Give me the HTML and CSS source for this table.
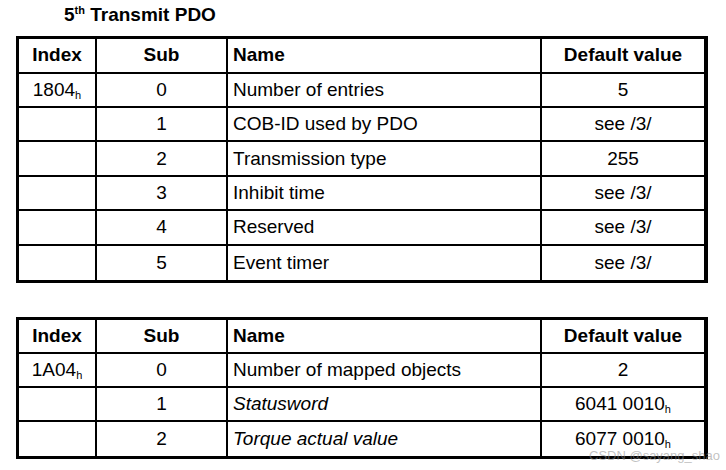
FILE: index.html
```html
<!DOCTYPE html>
<html>
<head>
<meta charset="utf-8">
<link rel="stylesheet" href="styles.css">
</head>
<body>
<div class="page">
  <h2 class="title">5<sup class="ord">th</sup> Transmit PDO</h2>
  <table class="obj first">
    <colgroup><col class="c1"><col class="c2"><col class="c3"><col class="c4"></colgroup>
    <thead>
      <tr><th>Index</th><th>Sub</th><th class="l">Name</th><th>Default value</th></tr>
    </thead>
    <tbody>
      <tr><td>1804<sub class="hx">h</sub></td><td>0</td><td class="l">Number of entries</td><td>5</td></tr>
      <tr><td></td><td>1</td><td class="l">COB-ID used by PDO</td><td>see /3/</td></tr>
      <tr><td></td><td>2</td><td class="l">Transmission type</td><td>255</td></tr>
      <tr><td></td><td>3</td><td class="l">Inhibit time</td><td>see /3/</td></tr>
      <tr><td></td><td>4</td><td class="l">Reserved</td><td>see /3/</td></tr>
      <tr><td></td><td>5</td><td class="l">Event timer</td><td>see /3/</td></tr>
    </tbody>
  </table>
  <table class="obj second">
    <colgroup><col class="c1"><col class="c2"><col class="c3"><col class="c4"></colgroup>
    <thead>
      <tr><th>Index</th><th>Sub</th><th class="l">Name</th><th>Default value</th></tr>
    </thead>
    <tbody>
      <tr><td>1A04<sub class="hx">h</sub></td><td>0</td><td class="l">Number of mapped objects</td><td>2</td></tr>
      <tr><td></td><td>1</td><td class="l it">Statusword</td><td>6041 0010<sub class="hx">h</sub></td></tr>
      <tr><td></td><td>2</td><td class="l it">Torque actual value</td><td>6077 0010<sub class="hx">h</sub></td></tr>
    </tbody>
  </table>
  <div class="wm">CSDN @sayang_shao</div>
</div>
</body>
</html>
```
FILE: styles.css
```css
html, body {
  margin: 0;
  padding: 0;
  background: #fff;
}
.page {
  position: relative;
  width: 726px;
  height: 470px;
  padding: 4px 0 0 16px;
  box-sizing: border-box;
  font-family: "Liberation Sans", Arial, sans-serif;
  color: #000;
}
.title {
  margin: 0 0 10px 48px;
  font-size: 19px;
  line-height: 22px;
  font-weight: bold;
}
.ord {
  font-size: 11px;
  line-height: 0;
  vertical-align: 7px;
}
.obj {
  width: 692px;
  table-layout: fixed;
  border-collapse: separate;
  border-spacing: 0;
  border-style: solid;
  border-color: #000;
  border-width: 3px 4px 3px 3px;
  font-size: 19px;
}
.second {
  margin-top: 34px;
}
.c1 { width: 78px; }
.c2 { width: 131px; }
.c3 { width: 314px; }
.c4 { width: 162px; }
.obj th, .obj td {
  box-sizing: border-box;
  padding: 0 5px;
  text-align: center;
  vertical-align: middle;
  border-right: 2px solid #000;
  border-bottom: 2px solid #000;
  white-space: nowrap;
  line-height: 22px;
}
.obj th {
  height: 34.5px;
  font-weight: bold;
}
.obj td {
  font-weight: normal;
}
.first td {
  height: 34.45px;
}
.second th {
  height: 34px;
}
.second td {
  height: 33.8px;
}
.obj tr > :last-child {
  border-right: none;
}
.obj tbody tr:last-child td {
  border-bottom: none;
}
.obj .l {
  text-align: left;
}
.obj .it {
  font-style: italic;
}
.hx {
  font-size: 11px;
  line-height: 0;
  vertical-align: -3px;
}
.wm {
  position: absolute;
  left: 589px;
  top: 449px;
  font-size: 13px;
  line-height: 14px;
  color: rgba(140, 140, 140, 0.55);
  white-space: nowrap;
}
```
